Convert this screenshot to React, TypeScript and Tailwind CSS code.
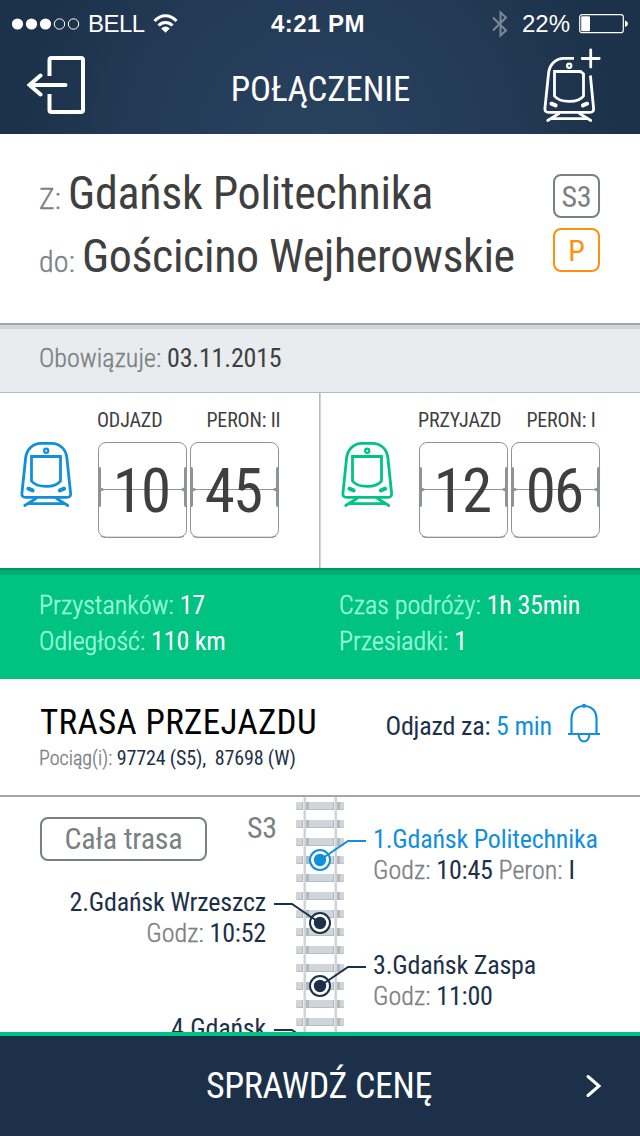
import React from 'react';

function TrainIcon({ className, withPlus = false }: { className: string; withPlus?: boolean }) {
  return (
    <svg viewBox="20 432 64 76" width="64" height="76" className={className} fill="none" stroke="currentColor" strokeWidth="2.8" strokeLinecap="round" strokeLinejoin="round">
      {withPlus ? (
        <>
          <path d="M51 443.3H41C32 443.3 26.5 450 25.6 458L21.9 493.500Q21.700 497.400 25.500 497.400H67Q70.800 497.400 70.600 493.500L67.400 460.500" strokeLinecap="butt" />
          <path d="M67.700 435V452M59.200 443.500H76.200" />
        </>
      ) : (
        <path d="M41 443.3H51.600C60.600 443.3 66 450 66.900 458L70.600 493.500Q70.800 497.400 67 497.400H25.500Q21.700 497.400 21.900 493.500L25.600 458C26.500 450 32 443.300 41 443.300Z" />
      )}
      <path d={withPlus ? 'M31.500 456.500H57.500L60.500 459V481C55.500 488.200 37 488.200 31.500 481Z' : 'M31.500 456.500H60.500V481C55.500 488.200 37 488.200 31.500 481Z'} strokeLinejoin="miter" />
      <circle cx="46.200" cy="450.700" r="2.100" strokeWidth="2.200" />
      <path d="M28.400 488.700L32.600 490.400M64.100 488.700L59.900 490.400" strokeWidth="4" />
      <path d="M24.700 505.500L36 498.500M67.800 505.500L56.500 498.500M29 503.600H63.500" strokeWidth="2.700" />
    </svg>
  );
}

function StatusBar() {
  return (
    <div className="flex h-[47px] items-center font-['Liberation_Sans',sans-serif] text-[24px] leading-[47px] tracking-normal">
      <div className="flex w-[213px] items-center pl-3">
        <svg width="68" height="14" viewBox="0 0 68 14" fill="none" stroke="white">
          <circle cx="5.500" cy="7" r="5.600" fill="white" stroke="none" />
          <circle cx="19.500" cy="7" r="5.600" fill="white" stroke="none" />
          <circle cx="33.500" cy="7" r="5.600" fill="white" stroke="none" />
          <circle cx="47.500" cy="7" r="5.200" />
          <circle cx="61.500" cy="7" r="5.200" />
        </svg>
        <span className="ml-[8px] w-[57px] tracking-[-0.5px]">BELL</span>
        <svg className="ml-[8px]" width="26" height="20" viewBox="0 0 26 20" fill="none" stroke="white" strokeWidth="3">
          <path d="M1.500 7C8 0 17 0 23.500 7M5.500 11.500C9.500 7.500 15.500 7.500 19.500 11.500" />
          <path d="M8.200 14.400Q12.500 10.500 16.800 14.400L12.500 18.700Z" fill="white" stroke="none" />
        </svg>
      </div>
      <div className="w-[210px] text-center font-bold tracking-[0.5px]">4:21 PM</div>
      <div className="flex flex-1 items-center justify-end pr-3">
        <svg className="mr-[13px] text-[#7b8998]" width="17" height="28" viewBox="0 0 17 28" fill="none" stroke="currentColor" strokeWidth="2">
          <path d="M1 7.500L14 20.500L8.500 25.500V2.500L14 7.500L1 20.500" />
        </svg>
        <span className="w-[51px]">22%</span>
        <svg className="ml-[6px]" width="49" height="20" viewBox="0 0 49 20">
          <rect x=".7" y=".7" width="43.600" height="18" rx="2.500" fill="none" stroke="white" strokeWidth="1.200" />
          <rect x="2.200" y="2.200" width="8.800" height="15" rx="1" fill="white" />
          <path d="M46 6.500Q49 7.500 49 9.700T46 13Z" fill="white" />
        </svg>
      </div>
    </div>
  );
}

function FlipCard({ value }: { value: string }) {
  return (
    <div className="relative h-24 w-[89px] pr-[3px] text-center text-[61px] leading-[98px] tracking-[-1.8px] text-[#3f3f3f]">
      <svg className="absolute inset-0 text-[#8e9393]" width="89" height="96" viewBox="0 0 89 96" fill="currentColor">
        <rect x=".5" y=".5" width="88" height="94.700" rx="7.500" fill="none" stroke="currentColor" />
        <path d="M3 94.200Q5 95.500 8 95.500H81Q84 95.500 86 94.200" fill="none" stroke="currentColor" />
        <path d="M3 47H86V48H3Z" />
        <path d="M0 25H1.500Q3 25 3 27V45.500L7 47.500L3 49.500V63Q3 65 1.500 65H0Z" />
        <path d="M89 25H87.500Q86 25 86 27V45.500L82 47.500L86 49.500V63Q86 65 87.500 65H89Z" />
      </svg>
      <span className="relative">{value}</span>
    </div>
  );
}

type TimePanelProps = { label: string; platform: string; hour: string; minute: string; color: string; labelRow: string };

function TimePanel({ label, platform, hour, minute, color, labelRow }: TimePanelProps) {
  return (
    <div className="flex w-[319px]">
      <TrainIcon className={`mt-[39px] ml-[20px] shrink-0 ${color}`} />
      <div className="ml-[14px] pt-[16px]">
        <div className={`flex h-[33px] text-[20px] leading-[23px] tracking-[-0.15px] text-[#3f3f3f] ${labelRow}`}>
          <span>{label}</span>
          <span>{platform}</span>
        </div>
        <div className="flex gap-[3px]">
          <FlipCard value={hour} />
          <FlipCard value={minute} />
        </div>
      </div>
    </div>
  );
}

function Track() {
  const sleepers = Array.from({ length: 13 }, (_, i) => 5 + i * 18);
  return (
    <svg width="92" height="235" viewBox="0 0 92 235" className="shrink-0">
      {sleepers.map((y) => (
        <g key={y}>
          <rect x="22" y={y} width="48" height="8" rx="1.500" fill="#b4bec3" />
          <rect x="22" y={y} width="48" height="7" rx="1.500" fill="#cfd5d9" />
          <rect x="32" y={y} width="3" height="8" fill="#b0babd" />
          <rect x="63" y={y} width="3" height="8" fill="#b0babd" />
          <rect x="28" y={y} width="1" height="8" fill="#b0babd" />
          <rect x="59" y={y} width="1" height="8" fill="#b0babd" />
        </g>
      ))}
      <path d="M30.500 0V235M61.500 0V235" stroke="#e4e8ea" strokeWidth="3" />
      <path d="M31 0V235M62 0V235" stroke="#cfd4d8" strokeWidth="2" />
      <g fill="none" strokeWidth="2">
        <g stroke="#118fdd">
          <circle cx="46" cy="63" r="10" fill="white" />
          <path d="M46 63L74 44H92" />
          <circle cx="46" cy="63" r="6.200" fill="#118fdd" stroke="none" />
        </g>
        <g stroke="#1c3149">
          <circle cx="46" cy="126" r="10" fill="white" />
          <path d="M46 126L18 107H0" />
          <circle cx="46" cy="126" r="6.200" fill="#1c3149" stroke="none" />
          <circle cx="46" cy="189" r="10" fill="white" />
          <path d="M46 189L74 170H92" />
          <circle cx="46" cy="189" r="6.200" fill="#1c3149" stroke="none" />
          <path d="M46 252L18 233H0" />
        </g>
      </g>
    </svg>
  );
}

type TextProps = { children: React.ReactNode };

const Label = ({ children }: TextProps) => (
  <span className="font-light tracking-[0.03px] text-[#7b8082] [-webkit-text-stroke:0.35px_#7b8082]">{children}</span>
);
const Mint = ({ children }: TextProps) => (
  <span className="font-light tracking-[0.05px] text-[#a0ffdc] [-webkit-text-stroke:0.35px_#a0ffdc]">{children}</span>
);
const Prefix = ({ children }: TextProps) => (
  <span className="text-[30px] leading-none font-light tracking-[0.2px] text-[#7b8082] [-webkit-text-stroke:0.35px_#7b8082]">{children}</span>
);

export default function App() {
  return (
    <div className="h-[1136px] w-[640px] overflow-hidden bg-white font-['Roboto_Condensed','Roboto',sans-serif] text-[26px] leading-[31px] tracking-[-0.2px] whitespace-pre text-[#1c3149] [font-stretch:75%]">
      <header className="h-[134px] bg-[radial-gradient(circle_at_50%_110%,#28435f_0px,#243a57_170px,#1c324a_300px)] text-white">
        <StatusBar />
        <div className="flex h-[84px] items-start">
          <svg className="mt-[9px] ml-[27px]" width="60" height="60" viewBox="26 56 60 60" fill="none" stroke="white" strokeWidth="4">
            <path d="M48.500 76V60Q48.500 58 50.500 58H80Q82 58 82 60V110Q82 112 80 112H50.500Q48.500 112 48.500 110V94" />
            <path d="M28.500 85H64.500M39.500 75.500L28.500 85L39.500 94.500" strokeLinecap="round" />
          </svg>
          <h1 className="flex-1 pl-[11px] text-center text-[35px] leading-[85px] tracking-[-0.1px]">POŁĄCZENIE</h1>
          <TrainIcon withPlus className="mr-[33px] shrink-0" />
        </div>
      </header>

      <section className="flex h-[189px] justify-between pt-[28px] pr-[40px] pl-[39px]">
        <div className="text-[46px] leading-[63px] text-[#3f3f3f]">
          <p className="h-[63px] tracking-[-0.28px]"><Prefix>Z: </Prefix>Gdańsk Politechnika</p>
          <p className="h-[63px] tracking-[-0.38px]"><Prefix>do: </Prefix>Gościcino Wejherowskie</p>
        </div>
        <div className="flex flex-col gap-[10px] pt-[12px] text-center text-[30px] leading-[41px]">
          <span className="h-[44px] w-[47px] rounded-[8px] border-2 border-[#7b8082] text-[#7b8082]">S3</span>
          <span className="h-[44px] w-[47px] rounded-[8px] border-2 border-[#ff900d] text-[#ff900d]">P</span>
        </div>
      </section>

      <section className="h-[70px] border-t-2 border-b border-t-[#a1a6a9] border-b-[#b5babd] bg-[#e8ecef]">
        <div className="h-1 bg-[#cfd4d8]" />
        <p className="pt-[14px] pl-[39px] text-[#3f3f3f]"><Label>Obowiązuje: </Label>03.11.2015</p>
      </section>

      <section className="flex h-[175px]">
        <TimePanel label="ODJAZD" platform="PERON: II" hour="10" minute="45" color="text-[#118fdd]" labelRow="-ml-px gap-[44px]" />
        <div className="w-[2px] border-r border-[#d0d4d8] bg-[#b5babd]" />
        <TimePanel label="PRZYJAZD" platform="PERON: I" hour="12" minute="06" color="text-[#00c582]" labelRow="-ml-px gap-[25px]" />
      </section>

      <section className="h-[111px] border-t-2 border-[#00955f] bg-[#00c281] text-white">
        <div className="h-[5px] bg-[#00ad72]" />
        <div className="flex pt-[12px] pl-[39px] leading-[36px]">
          <div className="w-[300px]">
            <p><Mint>Przystanków: </Mint>17</p>
            <p><Mint>Odległość: </Mint>110 km</p>
          </div>
          <div>
            <p><Mint>Czas podróży: </Mint>1h 35min</p>
            <p><Mint>Przesiadki: </Mint>1</p>
          </div>
        </div>
      </section>

      <section className="flex h-[118px] justify-between border-b-2 border-[#a1a6a9] pr-[40px] pl-[39px]">
        <div className="pt-[22px]">
          <h2 className="pl-px text-[35px] leading-[43px] tracking-[0.35px] text-black">TRASA PRZEJAZDU</h2>
          <p className="text-[20px] leading-[28px] tracking-[-0.15px]"><Label>Pociąg(i): </Label>97724 (S5),  87698 (W)</p>
        </div>
        <div className="flex items-start pt-[24px]">
          <p className="pt-[8px]">Odjazd za: <span className="text-[#118fdd]">5 min</span></p>
          <svg className="ml-[16px]" width="32" height="40" viewBox="568 703 32 40" fill="none" stroke="#118fdd" strokeWidth="2.200">
            <path d="M571.500 734V719C571.500 710.500 577 706 584 706S596.500 710.500 596.500 719V734M568 734H600M578.700 734C578.700 744 589.300 744 589.300 734" />
            <circle cx="584" cy="705.800" r="2.100" fill="#118fdd" stroke="none" />
          </svg>
        </div>
      </section>

      <section className="flex h-[235px] overflow-hidden">
        <div className="w-[274px] shrink-0 pt-[15px]">
          <div className="flex h-[75px] pl-[40px] text-[30px] text-[#7b8082]">
            <span className="mt-[5px] mr-[40px] h-[44px] w-[167px] shrink-0 rounded-[8px] border-2 border-[#7b8082] text-center leading-[40px]">Cała trasa</span>
            <span>S3</span>
          </div>
          <div className="h-[126px] pr-2 text-right">
            <p>2.Gdańsk Wrzeszcz</p>
            <p><Label>Godz: </Label>10:52</p>
          </div>
          <p className="pr-2 text-right">4.Gdańsk</p>
        </div>
        <Track />
        <div className="pt-[27px] pl-[7px]">
          <div className="h-[126px]">
            <p className="text-[#118fdd]">1.Gdańsk Politechnika</p>
            <p><Label>Godz: </Label>10:45 <Label>Peron: </Label>I</p>
          </div>
          <p>3.Gdańsk Zaspa</p>
          <p><Label>Godz: </Label>11:00</p>
        </div>
      </section>

      <footer className="flex h-[104px] items-center border-t-4 border-[#00c281] bg-[#1c3149] text-white">
        <span className="flex-1 pl-[53px] text-center text-[36px] leading-[96px] tracking-[-0.35px]">SPRAWDŹ CENĘ</span>
        <svg className="mr-[38px]" width="17" height="24" viewBox="0 0 17 24" fill="none" stroke="white" strokeWidth="3" strokeLinecap="round">
          <path d="M3 2.500L14 12L3 21.500" />
        </svg>
      </footer>
    </div>
  );
}
